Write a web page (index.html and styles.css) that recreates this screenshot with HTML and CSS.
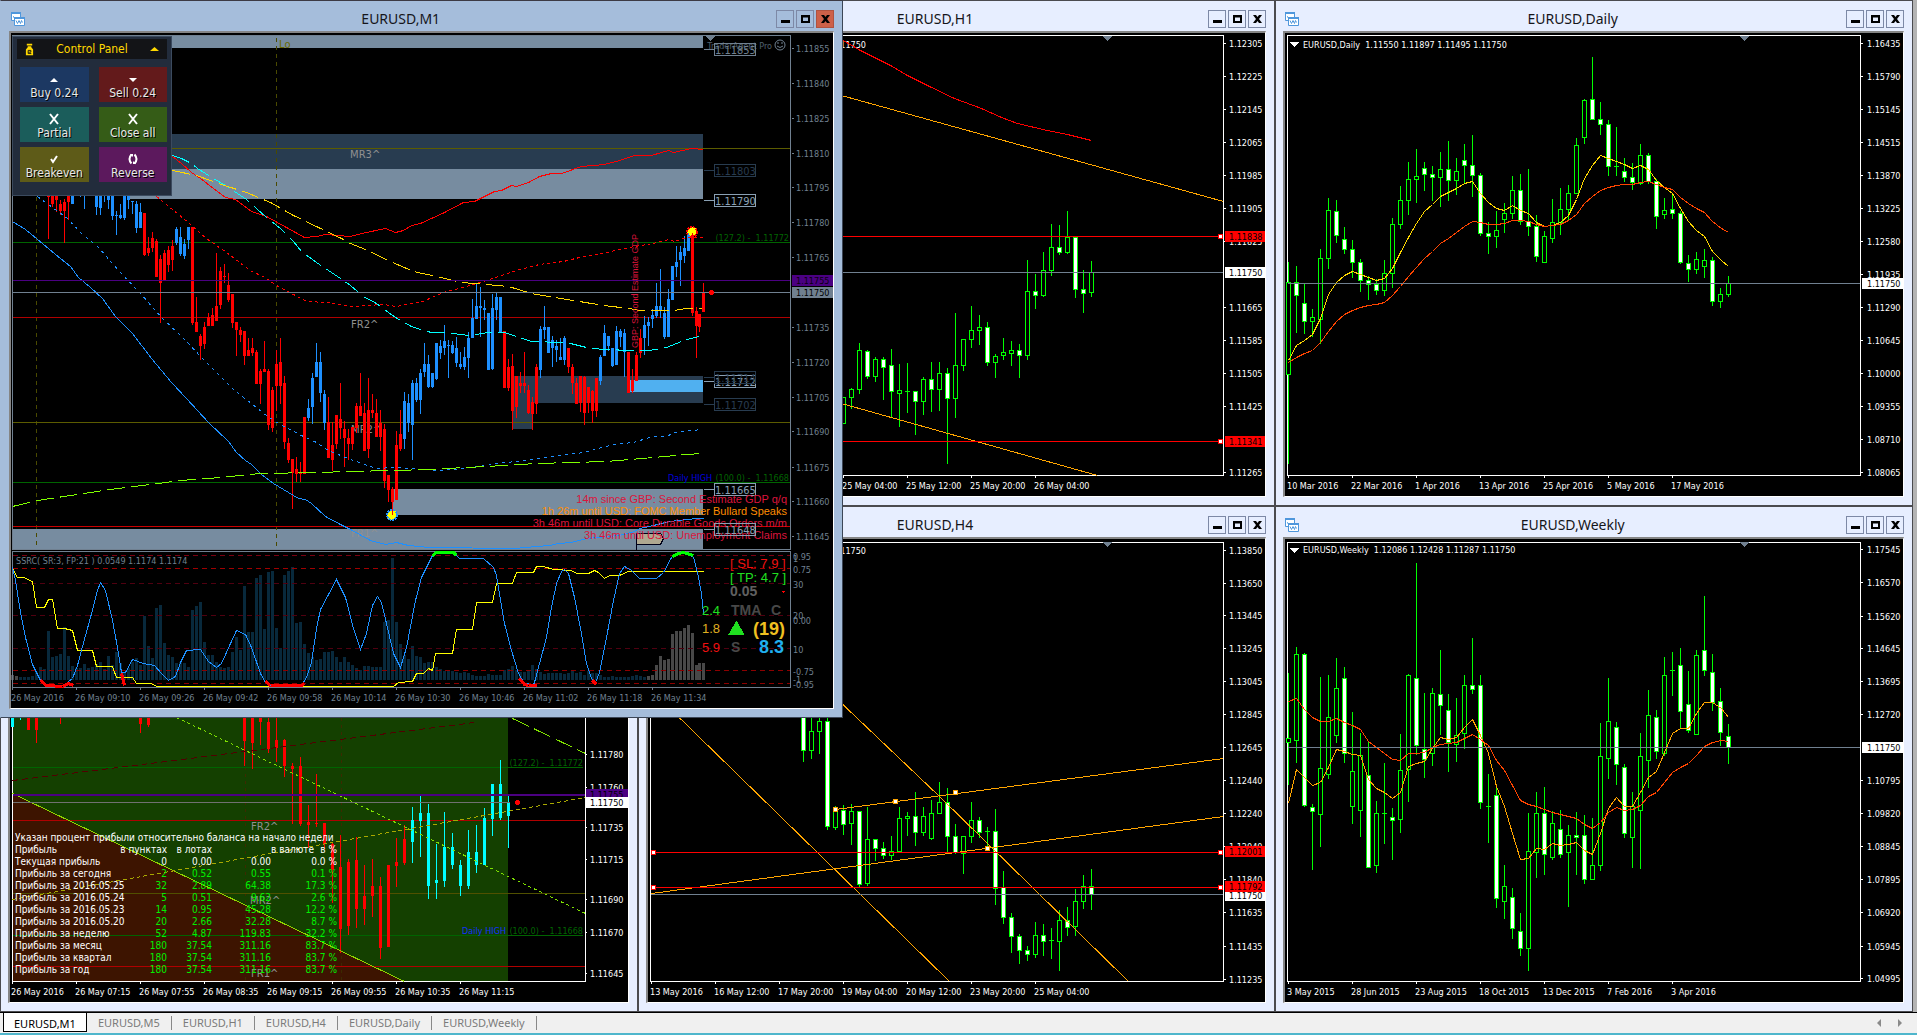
FILE: index.html
```html
<!DOCTYPE html>
<html lang="en">
<head>
<meta charset="utf-8">
<title>EURUSD,M1</title>
<link rel="stylesheet" href="styles.css">
</head>
<body>
<svg class="sprites" aria-hidden="true">
  <symbol id="chart-icon" viewBox="0 0 14 14">
    <path d="M0.500 0.500h9v8h-9z" fill="#fff" stroke="#4f97dc"/>
    <path d="M0 1h10" stroke="#4f97dc" stroke-width="2"/>
    <path d="M2.500 5.500v-1l1 1" fill="none" stroke="#4f97dc"/>
    <path d="M3.500 5.500h10v8h-10z" fill="#fff" stroke="#4f97dc"/>
    <path d="M3 6h11" stroke="#4f97dc" stroke-width="2"/>
    <path d="M5 8.500l1.500 3 1.500-3 1.500 3 1-3 1 2" fill="none" stroke="#4f97dc"/>
  </symbol>
  <symbol id="minimize" viewBox="0 0 16 16"><path d="M4 9h9v3H4z"/></symbol>
  <symbol id="maximize" viewBox="0 0 16 16"><path fill-rule="evenodd" d="M4 4h9v8H4zM6 6.500v3.500h5V6.500z"/></symbol>
  <symbol id="close" viewBox="0 0 16 16"><path d="M4 4h3l1.500 2L10 4h3l-3 4 3 4h-3l-1.500-2L7 12H4l3-4z"/></symbol>
</svg>
<main class="desk">
  <section class="window h1">
    <header class="bar">
      <svg class="app"><use href="#chart-icon"/></svg>
      <h2>EURUSD,H1</h2>
      <button aria-label="Minimize"><svg><use href="#minimize"/></svg></button>
      <button aria-label="Maximize"><svg><use href="#maximize"/></svg></button>
      <button aria-label="Close"><svg><use href="#close"/></svg></button>
    </header>
    <div class="client"><svg class="chart" data-chart="h1"></svg></div>
  </section>
  <section class="window daily">
    <header class="bar">
      <svg class="app"><use href="#chart-icon"/></svg>
      <h2>EURUSD,Daily</h2>
      <button aria-label="Minimize"><svg><use href="#minimize"/></svg></button>
      <button aria-label="Maximize"><svg><use href="#maximize"/></svg></button>
      <button aria-label="Close"><svg><use href="#close"/></svg></button>
    </header>
    <div class="client"><svg class="chart" data-chart="daily"></svg></div>
  </section>
  <section class="window m5">
    <header class="bar"></header>
    <div class="client">
      <svg class="chart" data-chart="m5"></svg>
      <table class="profit">
        <caption>Указан процент прибыли относительно баланса на начало недели</caption>
        <thead>
          <tr><th class="name">Прибыль</th><th class="points">в пунктах</th><th class="lots">в лотах</th><th class="sum"></th><th class="unit">в валюте</th><th class="share">в %</th></tr>
        </thead>
        <tbody>
          <tr class="now"><th>Текущая прибыль</th><td>0</td><td>0.00</td><td>0.00</td><td colspan="2">0.0 %</td></tr>
          <tr><th>Прибыль за сегодня</th><td>2</td><td>0.52</td><td>0.55</td><td colspan="2">0.1 %</td></tr>
          <tr><th>Прибыль за 2016.05.25</th><td>32</td><td>2.89</td><td>64.38</td><td colspan="2">17.3 %</td></tr>
          <tr><th>Прибыль за 2016.05.24</th><td>5</td><td>0.51</td><td>9.62</td><td colspan="2">2.6 %</td></tr>
          <tr><th>Прибыль за 2016.05.23</th><td>14</td><td>0.95</td><td>45.28</td><td colspan="2">12.2 %</td></tr>
          <tr><th>Прибыль за 2016.05.20</th><td>20</td><td>2.66</td><td>32.28</td><td colspan="2">8.7 %</td></tr>
          <tr><th>Прибыль за неделю</th><td>52</td><td>4.87</td><td>119.83</td><td colspan="2">32.2 %</td></tr>
          <tr><th>Прибыль за месяц</th><td>180</td><td>37.54</td><td>311.16</td><td colspan="2">83.7 %</td></tr>
          <tr><th>Прибыль за квартал</th><td>180</td><td>37.54</td><td>311.16</td><td colspan="2">83.7 %</td></tr>
          <tr><th>Прибыль за год</th><td>180</td><td>37.54</td><td>311.16</td><td colspan="2">83.7 %</td></tr>
        </tbody>
      </table>
    </div>
  </section>
  <section class="window h4">
    <header class="bar">
      <svg class="app"><use href="#chart-icon"/></svg>
      <h2>EURUSD,H4</h2>
      <button aria-label="Minimize"><svg><use href="#minimize"/></svg></button>
      <button aria-label="Maximize"><svg><use href="#maximize"/></svg></button>
      <button aria-label="Close"><svg><use href="#close"/></svg></button>
    </header>
    <div class="client"><svg class="chart" data-chart="h4"></svg></div>
  </section>
  <section class="window weekly">
    <header class="bar">
      <svg class="app"><use href="#chart-icon"/></svg>
      <h2>EURUSD,Weekly</h2>
      <button aria-label="Minimize"><svg><use href="#minimize"/></svg></button>
      <button aria-label="Maximize"><svg><use href="#maximize"/></svg></button>
      <button aria-label="Close"><svg><use href="#close"/></svg></button>
    </header>
    <div class="client"><svg class="chart" data-chart="weekly"></svg></div>
  </section>
  <section class="window m1">
    <header class="bar">
      <svg class="app"><use href="#chart-icon"/></svg>
      <h2>EURUSD,M1</h2>
      <button aria-label="Minimize"><svg><use href="#minimize"/></svg></button>
      <button aria-label="Maximize"><svg><use href="#maximize"/></svg></button>
      <button class="close" aria-label="Close"><svg><use href="#close"/></svg></button>
    </header>
    <div class="client">
      <svg class="chart" data-chart="m1"></svg>
      <div class="panel">
        <div class="panel-head">
          <svg class="purse" viewBox="0 0 10 13"><path d="M2 0h6v2H2zM3 3h4v1l2 2.500V13H1V6.500L3 4z" fill="#ffd800"/><path d="M3.500 9.500h3V7.500h-3v3.500h3.500" fill="none" stroke="#111"/></svg>
          <span>Control Panel</span>
          <svg class="arrow" viewBox="0 0 9 4"><path d="M0 4L4.500 0 9 4z" fill="#ffd800"/></svg>
        </div>
        <div class="actions">
          <button class="buy"><svg viewBox="0 0 12 12"><path d="M2 9L6 5l4 4z"/></svg>Buy 0.24</button>
          <button class="sell"><svg viewBox="0 0 12 12"><path d="M2 5h8L6 9z"/></svg>Sell 0.24</button>
          <button class="partial"><svg viewBox="0 0 12 12"><path d="M2 1l8 10M10 1L2 11" class="stroke"/></svg>Partial</button>
          <button class="closeall"><svg viewBox="0 0 12 12"><path d="M2 1l8 10M10 1L2 11" class="stroke"/></svg>Close all</button>
          <button class="even"><svg viewBox="0 0 12 12"><path d="M3 6l2 3 4-6" class="stroke"/></svg>Breakeven</button>
          <button class="reverse"><svg viewBox="0 0 12 12"><path d="M4.500 1.500Q0.500 6 4.500 10.500M7.500 1.500Q11.500 6 7.500 10.500" class="stroke"/><path d="M3 1h3v3zM9 11H6V8z"/></svg>Reverse</button>
        </div>
      </div>
    </div>
  </section>
</main>
<nav class="tabs">
  <button class="active">EURUSD,M1</button>
  <button>EURUSD,M5</button>
  <button>EURUSD,H1</button>
  <button>EURUSD,H4</button>
  <button>EURUSD,Daily</button>
  <button>EURUSD,Weekly</button>
  <span class="fill"></span>
  <button class="scroll" aria-label="Previous"><svg viewBox="0 0 5 8"><path d="M4 0v8L0 4z"/></svg></button>
  <button class="scroll" aria-label="Next"><svg viewBox="0 0 5 8"><path d="M1 0v8l4-4z"/></svg></button>
</nav>
<script src="charts.js"></script>
</body>
</html>
```
FILE: styles.css
```css
* { box-sizing: border-box; }
html, body { height: 100%; margin: 0; }
body {
  display: flex;
  flex-direction: column;
  overflow: hidden;
  background: #f0f0f0;
  border-bottom: 2px solid #4fb6cc;
  font-family: "Noto Sans", sans-serif;
  font-size: 11px;
}
button { font: inherit; padding: 0; margin: 0; border: 0; background: none; }
.sprites { position: absolute; width: 0; height: 0; }

.desk {
  position: relative;
  flex: 1;
  min-height: 0;
  display: grid;
  grid-template-columns: repeat(3, 1fr);
  grid-template-rows: repeat(2, minmax(0, 1fr));
  padding-right: 4px;
  background: #b4b4b4;
}
.window {
  display: flex;
  flex-direction: column;
  min-width: 0;
  padding: 0 8px 8px 7px;
  border: 1px solid #4b4b4f;
  background: #e7eeff;
}
.h1 { grid-area: 1 / 2; }
.daily { grid-area: 1 / 3; }
.m5 { grid-area: 2 / 1; }
.h4 { grid-area: 2 / 2; }
.weekly { grid-area: 2 / 3; }
.m1 {
  position: absolute;
  left: 0;
  top: 0;
  width: 44%;
  height: 70.95%;
  z-index: 2;
  padding-left: 8px;
  border-color: #3c3a44 #3c4656 #3c4656 #a5bddb;
  background: #a5bddb;
}
.bar { display: flex; align-items: center; gap: 2px; height: 30px; flex: none; padding: 6px 0 0 2px; }
.bar h2 { flex: 1; margin: 0; font-size: 14px; line-height: 20px; font-weight: 400; text-align: center; color: #15151a; }
.bar .app { width: 14px; height: 14px; }
.bar button { width: 18px; height: 18px; border: 1px solid #7d89a6; }
.bar button svg { display: block; width: 16px; height: 16px; }
.bar .close { background: #cd6048; border-color: #b0523f; }
.client {
  position: relative;
  flex: 1;
  min-height: 0;
  border: 2px solid #858585;
  border-right: 1px solid #fff;
  border-bottom: 1px solid #fff;
  background: #000;
}
.chart { position: absolute; inset: 0; width: 100%; height: 100%; display: block; }
.chart text { font-family: "DejaVu Sans Condensed", "DejaVu Sans", sans-serif; font-stretch: condensed; font-size: 9px; white-space: pre; }
.chart .mark { font-family: "DejaVu Sans", sans-serif; font-stretch: normal; font-size: 10px; }
.chart .tag { font-size: 11px; }
.chart .news { font-family: "Liberation Sans", sans-serif; font-size: 11px; font-stretch: normal; }
.chart .event { font-family: "Liberation Sans", sans-serif; font-size: 9px; font-stretch: normal; }
.chart .value { font-family: "Liberation Sans", sans-serif; font-size: 13px; font-stretch: normal; }
.chart .bold { font-family: "Liberation Sans", sans-serif; font-size: 14px; font-weight: 700; font-stretch: normal; }
.chart .big { font-family: "Liberation Sans", sans-serif; font-size: 18px; font-weight: 700; font-stretch: normal; }

.profit {
  position: absolute;
  left: 5px;
  bottom: 26px;
  width: 322px;
  table-layout: fixed;
  border-collapse: collapse;
  font: 10px/12px "DejaVu Sans Condensed", "DejaVu Sans", sans-serif;
  font-stretch: condensed;
  color: #00f000;
  white-space: nowrap;
}
.profit caption { text-align: left; color: #fff; line-height: 12px; }
.profit th { padding: 0; text-align: left; font-weight: 400; color: #fff; }
.profit td { padding: 0; text-align: right; }
.profit thead th { text-align: right; }
.profit thead .name { width: 92px; text-align: left; }
.profit .points { width: 60px; }
.profit .lots { width: 45px; }
.profit .sum { width: 59px; }
.profit .unit { width: 42px; }
.profit .now td { color: #fff; }

.panel {
  position: absolute;
  left: 1px;
  top: 3px;
  width: 160px;
  padding: 2px 4px 13px;
  border: 1px solid #3b4a5e;
  background: #222c3c;
  font: 12px/14px "DejaVu Sans Condensed", "DejaVu Sans", sans-serif;
  font-stretch: condensed;
  color: #e8e8e8;
}
.panel-head { display: flex; align-items: center; height: 20px; padding: 0 8px; background: #131417; color: #ffd800; }
.panel-head span { flex: 1; text-align: center; }
.purse { width: 9px; height: 13px; }
.arrow { width: 9px; height: 4px; }
.actions { display: grid; grid-template-columns: 1fr 1fr; gap: 5px 10px; padding: 8px 0 0 3px; }
.actions button {
  display: flex;
  flex-direction: column;
  align-items: center;
  justify-content: flex-end;
  height: 35px;
  gap: 1px;
  padding-bottom: 2px;
  color: #e8e8e8;
  text-shadow: 1px 1px 0 #000;
}
.actions svg { width: 12px; height: 12px; fill: #fff; }
.actions .stroke { fill: none; stroke: #fff; stroke-width: 2; }
.buy { background: #1c3862; }
.sell { background: #631a1b; }
.partial { background: #1b5d5b; }
.closeall { background: #355c17; }
.even { background: #5e5b18; }
.reverse { background: #5c195d; }

.tabs {
  display: flex;
  flex: none;
  height: 21px;
  padding: 0 8px 1px 3px;
  border-top: 1px solid #000;
  background: #f0f0f0;
  box-shadow: 0 -1px 0 #fff;
}
.tabs button { padding: 0 11px; color: #7b7b7b; border-right: 1px solid #888; margin: 3px 0 2px; line-height: 14px; }
.tabs .active { margin: 0; padding: 3px 10px 0; border: 1px solid #000; border-top: 0; background: #fff; color: #000; }
.fill { flex: 1; }
.tabs .scroll { width: 20px; border: 0; padding: 0; }
.scroll svg { display: block; width: 5px; height: 8px; margin: auto; fill: #8a8a8a; }
```
FILE: charts.js
```js
// Each chart lists its shapes in its own view units [left, top, right, bottom];
// the view is fitted to the window, and text keeps its size.
const LIME = '#00ff00', SLATE = '#708090', ORANGE = '#ffa500', GREEN = '#006400';
const px = (n) => Math.round(n);

// ticks of the time axis
const times = (x, step, y, tick, labels, color) => [
  ...labels.map((s, i) => ['text', x + i * step, y, color, s]),
  ...labels.map((s, i) => ['v', x + 3 + i * step, tick, tick + 9, color]),
];
// ticks of the price axis
const prices = (x, ys, labels, color) => [
  ...labels.map((s, i) => ['text', x, ys[i], color, s]),
  ...labels.map((s, i) => ['h', ys[i], x - 14, x - 8, color]),
];
const even = (from, step, n) => Array.from({ length: n }, (_, i) => from + i * step);

const charts = {
  daily: { view: [37, 99, 1534, 1488], items: [
    ['frame', 43, 106, 1431, 1426, '#fff'],
    ['candles', 44, 19.388, `787 847 1123 1393 o,798 847 886 998 w,850 909 964 1001 w,927 952 964 1010 o,747 775 956 1031 o,594 631 775 807 o,600 634 706 728 w,682 717 748 761 w,720 748 787 834 w,777 787 841 876 w,828 841 853 900 w,838 853 871 884 w,781 820 871 887 o,654 673 820 864 o,558 601 673 687 o,487 538 601 645 o,447 529 538 608 o,487 505 523 573 w,499 523 532 604 w,456 508 532 621 o,423 508 541 602 w,475 514 541 584 o,432 481 496 550 w,405 496 526 590 w,519 526 700 709 w,667 700 709 762 w,633 691 709 744 o,609 640 658 700 o,528 571 640 657 o,522 571 664 675 w,507 664 679 708 w,645 679 769 786 w,693 709 787 789 o,597 667 715 728 o,564 628 667 705 o,555 580 628 664 o,414 436 580 583 o,297 301 412 432 o,171 298 358 360 w,306 358 373 405 w,361 373 499 528 w,381 499 502 528 o,475 514 532 546 w,489 532 547 570 w,432 466 550 555 o,460 466 544 551 w,537 544 649 687 w,594 631 643 657 o,582 628 640 657 w,634 640 787 791 w,765 790 808 846 w,756 778 808 822 o,747 781 799 834 o,772 781 904 917 w,864 883 904 923 o,828 850 883 890 o`],
    ['line', '#ffd700', '', 1, '44,1080 64,1036 83,1019 103,1003 122,953 142,883 161,845 180,824 200,814 219,821 238,830 258,839 277,835 297,805 316,755 335,710 355,668 374,633 393,612 413,588 432,576 452,563 471,550 490,544 510,578 529,607 549,624 568,629 587,616 606,629 626,640 645,666 665,677 684,676 704,665 723,645 743,597 762,534 781,494 800,466 820,474 839,483 859,493 878,505 898,495 917,508 936,540 956,560 975,580 995,625 1014,663 1033,690 1053,709 1072,753 1092,780 1111,797'],
    ['line', '#ff4500', '', 1, '44,1087 64,1070 83,1060 103,1050 122,1025 142,993 161,964 180,943 200,930 219,922 238,916 258,913 277,905 297,885 316,858 335,828 355,800 374,774 393,752 413,729 432,715 452,696 471,679 490,664 510,665 529,671 549,673 568,670 587,661 606,661 626,664 645,673 665,677 684,675 704,671 723,661 743,642 762,609 781,589 800,569 820,562 839,556 859,553 878,552 898,547 917,544 936,553 956,562 975,568 995,590 1014,610 1033,624 1053,636 1072,664 1092,683 1111,697'],
    ['h', 850, 45, 1431, SLATE],
    ['tri', 59, 132, '#fff'], ['tri', 1150, 115, SLATE],
    ['text', 81, 131, '#fff', 'EURUSD,Daily  1.11550 1.11897 1.11495 1.11750'],
    ...prices(1446, even(130, 99, 14), '1.16435 1.15790 1.15145 1.14515 1.13870 1.13225 1.12580 1.11935 1.11290 1.10645 1.10000 1.09355 1.08710 1.08065'.split(' '), '#fff'),
    ['price', 1435, 850, '#fff', '#000', '1.11750', 1446],
    ...times(42, 155.1, 1454, 1426, ['10 Mar 2016', '22 Mar 2016', '1 Apr 2016', '13 Apr 2016', '25 Apr 2016', '5 May 2016', '17 May 2016'], '#fff'),
  ] },
  weekly: { view: [37, 100.6, 1534, 1470], items: [
    ['frame', 43, 108, 1431, 1409, '#fff'],
    ['candles', 44, 19.388, `497 690 702 827 o,420 442 696 763 o,438 442 886 893 w,885 892 906 1080 w,509 779 915 1012 o,503 628 797 810 o,453 542 681 704 o,479 513 733 763 w,612 788 891 943 o,673 739 903 981 o,698 800 1070 1071 w,876 912 1066 1089 o,763 911 913 1003 o,896 923 931 1050 w,677 785 930 969 o,500 504 780 879 o,172 513 711 740 w,556 723 752 807 w,541 557 733 772 o,429 560 593 680 w,559 607 702 790 w,571 681 708 760 o,503 533 673 721 o,393 531 545 559 w,503 533 877 899 w,796 891 894 1000 o,838 859 1161 1192 w,1065 1128 1170 1225 o,1133 1158 1252 1284 w,1207 1261 1309 1333 w,911 1022 1309 1379 o,850 912 1025 1104 o,833 912 1033 1095 w,905 942 1042 1050 o,902 957 1031 1043 w,947 977 1025 1189 o,908 977 983 1095 w,917 977 1107 1121 w,926 1066 1105 1109 o,646 741 1066 1084 o,512 640 749 809 o,642 658 767 827 w,767 776 971 985 w,850 891 983 1074 o,675 741 903 1077 o,547 622 755 838 o,606 628 729 750 w,450 504 733 741 o,435 489 492 566 o,423 474 610 660 w,491 590 665 674 w,429 445 676 677 o,269 430 487 506 w,441 495 584 609 w,541 581 670 713 w,649 684 717 767 w`],
    ['line', ORANGE, '', 1, '44,882 64,782 83,806 103,828 122,818 142,776 161,723 180,727 200,737 219,739 238,809 258,836 277,850 297,867 316,850 335,773 355,762 374,758 393,718 413,687 432,691 452,687 471,657 490,632 510,680 529,735 549,830 568,890 587,970 606,1048 626,1043 645,1014 665,1018 684,1001 704,1006 723,1002 743,998 762,1021 781,1032 800,970 820,897 839,865 859,890 878,890 898,850 917,805 936,788 956,731 975,675 995,661 1014,661 1033,615 1053,584 1072,584 1092,600 1111,627'],
    ['line', '#ff4500', '', 1, '44,580 64,570 83,602 103,627 122,640 142,640 161,631 180,641 200,652 219,662 238,698 258,717 277,734 297,751 316,755 335,733 355,733 374,731 393,716 413,706 432,705 452,702 471,688 490,676 510,693 529,711 549,753 568,785 587,829 606,872 626,885 645,890 665,900 684,908 704,915 723,921 743,927 762,945 781,954 800,937 820,908 839,893 859,903 878,899 898,888 917,862 936,850 956,820 975,790 995,774 1014,764 1033,738 1053,712 1072,700 1092,696 1111,698'],
    ['h', 717, 45, 1431, SLATE],
    ['tri', 59, 132, '#fff'], ['tri', 1150, 116, SLATE],
    ['text', 81, 131, '#fff', 'EURUSD,Weekly  1.12086 1.12428 1.11287 1.11750'],
    ...prices(1446, [131, 229, 327, 424, 522, 619, 814, 912, 1010, 1107, 1205, 1303, 1400], '1.17545 1.16570 1.15620 1.14645 1.13695 1.12720 1.10795 1.09820 1.08845 1.07895 1.06920 1.05945 1.04995'.split(' '), '#fff'),
    ['price', 1435, 717, '#fff', '#000', '1.11750', 1446],
    ...times(42, 155.1, 1437, 1409, ['3 May 2015', '28 Jun 2015', '23 Aug 2015', '18 Oct 2015', '13 Dec 2015', '7 Feb 2016', '3 Apr 2016'], '#fff'),
  ] },
  h1: { view: [-577, 99, 1276, 1488], items: [
    ['frame', -570, 106, 1147, 1426, '#fff'],
    ['text', 78, 131, '#fff', '1.11750', '', 'end'],
    ['candles', 7, 24, `1190 1192 1268 1270 o,1163 1168 1192 1226 o,1029 1051 1168 1181 o,1049 1054 1127 1136 w,1071 1078 1127 1145 o,1071 1078 1100 1200 w,1047 1096 1174 1253 w,1092 1171 1178 1280 o,1089 1174 1175 1240 o,1172 1174 1204 1304 w,1131 1138 1204 1244 o,1086 1138 1168 1236 w,1086 1120 1168 1232 o,1104 1120 1195 1391 w,939 1096 1195 1253 o,1017 1018 1096 1112 o,918 991 1018 1044 o,945 982 991 1034 o,966 982 1087 1098 w,1062 1069 1087 1134 o,1014 1057 1066 1080 o,1023 1051 1060 1098 o,1032 1051 1066 1134 w,780 874 1066 1080 o,823 874 886 926 w,756 811 886 890 o,672 742 811 828 o,675 742 757 765 w,633 710 757 762 o,709 710 868 893 w,810 868 880 939 w,783 817 877 890 o`],
    ['line', '#ff0000', '', 1, '2,118 60,150 150,195 200,224 260,255 340,294 420,325 480,352 530,369 620,391 680,402 750,421'],
    ['line', ORANGE, '', 1, '2,284 1146,604'],
    ['line', ORANGE, '', 1, '2,1210 768,1424'],
    ['h', 709, 0, 1146, '#ff0000'], ['h', 1324, 0, 1146, '#ff0000'], ['h', 817, 0, 1146, SLATE],
    ['grip', 1138, 709, '#ff0000'], ['grip', 1138, 1324, '#ff0000'], ['tri', 799, 115, SLATE],
    ...prices(1165, [130, 229, 328, 427, 526, 625, 724, 922, 1021, 1120, 1219, 1417], '1.12305 1.12225 1.12145 1.12065 1.11985 1.11905 1.11825 1.11665 1.11585 1.11505 1.11425 1.11265'.split(' '), '#fff'),
    ['price', 1152, 707, '#ff0000', '#000', '1.11838', 1165], ['price', 1152, 817, '#fff', '#000', '1.11750', 1165], ['price', 1152, 1322, '#ff0000', '#000', '1.11341', 1165],
    ...times(4, 192, 1454, 1426, ['25 May 04:00', '25 May 12:00', '25 May 20:00', '26 May 04:00'], '#fff'),
  ] },
  h4: { view: [18.8, 86.6, 1532, 1469.6], items: [
    ['frame', 24, 95, 1427, 1408, '#fff'],
    ['text', 553, 118, '#fff', '1.11750', '', 'end'],
    ['candles', 398, 19.6, `560 560 718 752 w,560 661 718 744 o,600 631 661 728 o,615 631 945 956 w,885 896 948 956 o,880 896 937 970 w,878 900 934 1001 o,898 900 1118 1126 w,887 984 1115 1123 o,983 984 1010 1048 w,992 1010 1031 1042 w,974 1019 1031 1044 o,887 921 1019 1020 o,902 915 921 974 o,842 915 963 1004 w,887 915 963 974 o,865 906 981 986 o,812 873 906 908 o,829 873 975 1022 w,938 975 1022 1029 w,974 975 1025 1087 o,872 927 975 994 o,917 927 963 980 w,947 959 962 1010 o,893 960 1130 1179 w,1078 1127 1217 1238 w,1204 1217 1273 1323 w,1265 1273 1315 1356 w,1302 1315 1325 1346 w,1231 1270 1325 1337 o,1236 1270 1286 1331 w,1250 1285 1288 1341 o,1194 1226 1286 1376 o,1186 1226 1246 1272 w,1132 1169 1244 1272 o,1090 1124 1169 1191 o,1072 1124 1148 1194 w`],
    ['line', ORANGE, '', 1, '26,538 757,1407'], ['line', ORANGE, '', 1, '480,563 730,852 1195,1407'],
    ['line', ORANGE, '', 1, '476,894 1427,740'], ['line', ORANGE, '', 1, '26,1145 1427,915'],
    ['h', 1022, 26, 1427, '#ff0000'], ['h', 1127, 26, 1427, '#ff0000'], ['h', 1148, 26, 1427, SLATE],
    ['grip', 476, 894, ORANGE], ['grip', 623, 870, ORANGE], ['grip', 770, 843, ORANGE], ['grip', 849, 1011, ORANGE],
    ['grip', 30, 1022, '#ff0000'], ['grip', 30, 1127, '#ff0000'], ['grip', 1420, 1022, '#ff0000'], ['grip', 1420, 1127, '#ff0000'],
    ['tri', 1143, 103, SLATE],
    ...prices(1441, [118, 217, 315, 413, 512, 610, 709, 807, 906, 1004, 1103, 1202, 1301, 1400], '1.13850 1.13650 1.13445 1.13245 1.13045 1.12845 1.12645 1.12440 1.12240 1.12040 1.11840 1.11635 1.11435 1.11235'.split(' '), '#fff'),
    ['price', 1431, 1149, '#fff', '#000', '1.11750', 1441], ['price', 1431, 1020, '#ff0000', '#000', '1.12001', 1441], ['price', 1431, 1124, '#ff0000', '#000', '1.11792', 1441],
    ...times(23, 156.7, 1436, 1408, ['13 May 2016', '16 May 12:00', '17 May 20:00', '19 May 04:00', '20 May 12:00', '23 May 20:00', '25 May 04:00'], '#fff'),
  ] },
  m5: { view: [24.5, -513, 1538, 876], items: [
    ['zone', 30, -506, 1245, 814, '#144000'],
    ['area', '#3d1400', '30,250 990,812 30,812'],
    ['frame', 30, -506, 1433, 814, '#fff'],
    ['line', '#3c2a00', '3 4', 1, '599,22 599,812'], ['line', '#3c2a00', '3 4', 1, '834,22 834,812'],
    ['h', 171, 32, 1428, GREEN], ['h', 331, 32, 1433, '#b00000'], ['h', 550, 32, 1433, '#505000'],
    ['h', 676, 32, 1428, GREEN], ['h', 769, 32, 1433, '#b00000'],
    ['bars', 30, 19.6, 3, `0 0 52 52 c,22 22 22 30 c,0 0 59 59 r,0 0 59 98 r,-,-,0 0 0 41 r,-,-,-,-,-,-,-,-,-,0 0 41 69 r,0 0 44 50 r,-,-,-,-,-,-,-,-,-,-,-,0 0 92 167 r,0 0 98 176 r,0 0 36 104 r,22 35 118 130 r,0 90 113 155 r,88 90 167 200 r,160 168 176 341 r,141 168 341 348 r,285 337 346 415 r,192 340 343 350 r,339 339 403 420 r,395 403 480 580 r,374 470 658 730 r,448 455 647 675 r,382 450 598 654 r,465 557 596 645 r,446 528 557 622 r,500 528 715 747 r,465 465 710 712 r,383 455 467 530 r,345 387 458 464 r,291 330 395 458 c,258 308 332 440 c,282 308 527 567 c,402 509 518 567 c,307 410 512 530 c,369 410 464 478 c,450 464 527 557 c,360 427 527 537 c,345 427 464 488 c,295 323 464 465 c,222 222 326 378 c,150 222 323 330 c,258 277 317 413 c`],
    ['line', '#500000', '6 4', 1, '30,209 290,170 1160,35'],
    ['line', '#8fd400', '', 1, '30,250 990,812'], ['line', '#7fe000', '3 3', 1, '430,22 1433,610'],
    ['line', '#7fe000', '18 6', 1, '1255,25 1433,130'], ['line', '#a8a800', '4 3', 1, '30,568 1433,262'],
    ['h', 253, 32, 1433, '#4b0082', 2], ['h', 277, 32, 1250, '#707070'], ['dot', 1265, 277],
    ['text', 1428, 155, GREEN, '(127.2) -  1.11772', '', 'end'],
    ['text', 1428, 659, GREEN, '(100.0) -  1.11668', '', 'end'], ['text', 1239, 659, '#1030ff', 'Daily HIGH', '', 'end'],
    ['text', 615, 349, '#909090', 'FR2^', 'mark'], ['text', 613, 570, '#909090', 'MR2^', 'mark'], ['text', 615, 788, '#909090', 'FR1^', 'mark'],
    ...prices(1446, [131, 230, 350, 448, 568, 667, 788], '1.11780 1.11760 1.11735 1.11715 1.11690 1.11670 1.11645'.split(' '), '#fff'),
    ['price', 1436, 253, '#4b0082', '#000', '1.11755', 1446], ['price', 1436, 277, '#fff', '#000', '1.11750', 1446],
    ...times(27, 156.8, 842, 814, ['26 May 2016', '26 May 07:15', '26 May 07:55', '26 May 08:35', '26 May 09:15', '26 May 09:55', '26 May 10:35', '26 May 11:15'], '#fff'),
  ] },
  m1: { view: [33, 99, 2502, 2124], items: [
    ['zone', 390, 108, 2112, 144, '#778ca0'], ['zone', 390, 402, 2112, 507, '#283c50'], ['zone', 390, 507, 2112, 597, '#778ca0'],
    ['zone', 36, 1587, 2112, 1646, '#778ca0'], ['zone', 1180, 1467, 2112, 1545, '#778ca0'],
    ['zone', 1545, 1128, 2112, 1209, '#283c50'], ['zone', 1540, 1209, 1600, 1287, '#283c50'], ['zone', 1890, 1140, 2112, 1176, '#50b0f0'],
    ['line', '#4a4a00', '4 4', 1, '109,587 109,1646'], ['line', '#4a4a00', '4 4', 1, '829,110 829,1646'],
    ['h', 445, 390, 2373, '#5c5c00'], ['h', 727, 36, 2373, GREEN], ['h', 952, 36, 2373, '#b00000'],
    ['h', 1267, 36, 2373, '#5c5c00'], ['h', 1447, 36, 2373, GREEN], ['h', 1579, 36, 2373, '#c80000'],
    ['text', 838, 131, '#6a6a00', 'Lo', 'mark'],
    ['text', 1052, 463, '#909090', 'MR3^', 'mark'], ['text', 1055, 971, '#909090', 'FR2^', 'mark'],
    ['text', 1055, 1286, '#909090', 'MR2^', 'mark'], ['text', 1055, 1598, '#909090', 'FR1^', 'mark'],
    ['sun', 1177, 1546, '#1e90ff'], ['sun', 2077, 696, '#ff0000'],
    ['bars', 145, 12, 3, `560 560 590 718 r,560 560 613 620 r,560 560 600 637 r,600 612 634 645 r,597 605 634 730 r,560 560 606 661 r,560 560 613 613 b,-,560 560 560 590 b,560 560 560 627 b,-,-,560 560 620 645 b,560 560 625 645 b,560 560 560 605 b,560 560 600 628 b,560 560 647 660 b,633 645 648 705 b,613 645 655 657 b,560 560 655 660 b,560 560 600 628 b,603 603 606 642 b,603 612 683 698 b,610 637 683 683 b,638 638 766 768 r,710 745 758 767 r,697 715 745 757 r,717 724 830 830 r,765 778 850 968 r,750 758 843 843 r,738 750 795 816 r,720 738 780 813 r,682 688 728 735 b,682 710 762 767 b,717 733 767 778 b,682 682 720 747 b,682 682 968 975 r,892 965 995 995 r,1002 1008 1038 1080 r,965 980 1032 1047 r,938 952 977 977 r,925 945 977 977 r,760 917 962 962 r,800 812 915 927 r,792 828 832 850 r,820 855 900 907 r,882 882 968 983 r,965 965 990 1068 r,980 990 1005 1025 r,993 993 1067 1095 r,1013 1050 1067 1067 r,1013 1043 1058 1068 r,1050 1055 1152 1152 r,1107 1113 1152 1213 r,1022 1108 1115 1115 r,1108 1113 1275 1290 r,1160 1170 1283 1297 r,1050 1092 1157 1233 r,1013 1086 1157 1213 r,1128 1150 1325 1347 r,1315 1328 1380 1388 r,1377 1377 1420 1527 r,1370 1407 1422 1446 r,1385 1415 1422 1446 r,1250 1250 1422 1422 r,1197 1224 1254 1263 b,1120 1133 1220 1273 b,1028 1086 1130 1130 b,1056 1086 1178 1205 b,1170 1183 1268 1290 b,1190 1267 1373 1373 r,1265 1335 1380 1413 r,1245 1245 1332 1348 r,1150 1258 1283 1317 r,1263 1288 1315 1400 r,1287 1314 1332 1380 r,1282 1282 1332 1350 r,1210 1218 1283 1300 r,1120 1218 1247 1248 r,1210 1240 1353 1353 r,1133 1230 1348 1375 r,1183 1230 1240 1253 r,1197 1240 1310 1310 r,1230 1268 1310 1353 r,1272 1288 1443 1465 r,1425 1425 1470 1507 r,1462 1467 1507 1545 r,1293 1335 1500 1500 r,1230 1302 1347 1353 r,1177 1202 1317 1347 b,1183 1210 1268 1297 b,1140 1150 1275 1380 b,1133 1150 1200 1207 b,1107 1119 1200 1242 b,1028 1092 1115 1130 b,1065 1093 1160 1163 b,1118 1120 1160 1165 b,1028 1030 1137 1140 b,1020 1037 1058 1078 b,975 1023 1045 1065 b,1020 1034 1038 1135 b,1022 1035 1058 1062 b,1010 1045 1088 1100 b,1057 1092 1100 1107 b,1042 1072 1100 1110 b,995 1015 1073 1135 b,897 953 1015 1015 b,850 918 957 957 b,860 918 925 1010 b,900 925 930 960 b,938 938 1110 1110 b,882 925 1108 1110 b,880 892 930 960 b,890 890 997 997 b,993 993 1163 1163 r,1077 1100 1163 1172 r,1063 1098 1232 1290 r,1128 1128 1220 1253 r,1117 1150 1158 1178 r,1055 1148 1157 1180 r,1155 1170 1240 1242 r,1190 1207 1242 1290 r,1092 1100 1213 1242 r,978 988 1110 1135 b,917 980 990 1017 b,980 982 1058 1060 b,1007 1020 1043 1100 b,1020 1037 1050 1085 b,1015 1070 1080 1080 b,1008 1015 1080 1095 b,1045 1045 1102 1120 r,1092 1100 1150 1182 r,1133 1150 1213 1213 r,1128 1128 1210 1235 r,1128 1130 1240 1275 r,1160 1162 1210 1240 r,1170 1172 1232 1270 r,1133 1133 1232 1250 r,1065 1072 1143 1155 b,975 1000 1067 1067 b,1008 1008 1038 1053 b,1045 1045 1097 1100 b,977 993 1095 1095 b,988 992 1010 1042 b,988 1000 1055 1130 b,1055 1055 1178 1180 r,1107 1140 1173 1178 r,1055 1065 1143 1143 r,987 1015 1060 1075 r,947 975 1015 1065 b,950 965 978 1038 b,928 945 957 985 b,850 917 947 955 b,807 917 933 955 b,922 938 1010 1017 b,868 897 1010 1010 b,797 797 900 900 b,738 785 800 830 b,738 757 780 858 b,708 743 767 790 b,700 705 752 752 b,700 705 940 947 r,922 933 977 1073 r,943 943 982 995 r,848 878 935 935 r`],
    ['line', '#ff0000', '', 1, '517,467 545,490 575,515 600,535 640,565 675,592 705,597 755,632 800,648 860,682 912,710 950,708 975,702 1050,708 1085,698 1155,685 1187,697 1210,690 1235,676 1262,670 1295,655 1335,635 1390,605 1425,602 1485,572 1505,570 1535,555 1550,557 1585,547 1620,528 1655,520 1685,519 1745,499 1815,492 1860,480 1905,465 1955,465 2005,450 2022,457 2075,445 2112,446'],
    ['line', '#00ffff', '18 6', 1, '517,465 545,475 575,488 592,505 640,533 675,555 740,598 800,652 840,685 880,722 905,752 950,787 1020,835 1050,855 1090,887 1130,908 1165,935 1185,950 1235,977 1270,989 1295,995 1330,997 1410,1005 1465,997 1515,997 1595,1022 1620,1024 1665,1025 1700,1027 1760,1042 1810,1048 1900,1050 1950,1050 2000,1040 2030,1030 2060,1017 2100,1008'],
    ['line', '#ffd700', '18 6', 1, '517,510 590,525 665,552 740,575 810,607 880,645 955,682 1025,715 1050,730 1095,748 1170,782 1240,812 1310,828 1385,845 1425,850 1460,853 1525,858 1595,878 1665,892 1740,902 1810,915 1890,925 1920,931 2020,931 2060,923 2105,923'],
    ['line', '#ff0000', '3 3', 1, '470,587 550,655 620,715 680,755 755,812 790,827 830,855 880,882 920,903 980,905 1050,917 1150,913 1190,918 1230,910 1260,905 1310,885 1340,873 1390,860 1460,840 1550,810 1620,793 1690,782 1750,768 1820,757 1890,742 1960,730 2005,718 2025,722 2060,712 2110,712'],
    ['line', '#1e90ff', '', 1, '35,663 75,688 125,730 165,763 210,797 235,830 270,860 305,895 345,947 395,1000 455,1075 515,1147 560,1195 625,1265 685,1322 710,1355 735,1380 755,1392 785,1422 820,1450 895,1493 915,1497 935,1508 975,1548 1020,1573 1050,1588 1110,1620 1155,1633 1190,1625 1225,1635 1290,1642 1545,1643 1610,1638 1650,1635 1675,1628 1715,1627 1760,1615 1790,1610 1860,1605 1905,1592 1920,1585 1960,1575 2010,1562 2090,1553 2112,1555'],
    ['line', '#1e90ff', '3 4', 1, '110,587 155,622 200,655 240,695 295,742 355,810 420,880 485,950 550,1015 610,1078 700,1168 800,1245 835,1270 910,1307 950,1325 985,1350 1050,1378 1130,1403 1180,1402 1310,1410 1395,1405 1460,1393 1550,1383 1640,1370 1750,1355 1840,1332 1900,1325 1950,1310 2005,1305 2025,1295 2105,1288'],
    ['line', '#7fff00', '18 6', 1, '35,1517 110,1500 250,1480 330,1467 475,1450 540,1440 660,1430 780,1420 950,1417 1050,1414 1180,1410 1290,1408 1340,1405 1460,1398 1610,1390 1820,1382 1960,1372 2060,1362 2105,1360'],
    ['h', 841, 36, 2373, '#4b0082'], ['h', 877, 36, 2373, SLATE], ['dot', 2137, 877],
    ['frame', 36, 106, 2374, 1646, SLATE],
    ['text', 2320, 135, '#50606f', 'TraderAgent Pro', '', 'end'], ['smile', 2342, 135],
    ['boxed', 147, SLATE, '1.11855'], ['boxed', 510, '#283c50', '1.11803'], ['boxed', 600, '#8aa0b4', '1.11790'],
    ['boxed', 1142, '#8aa0b4', '1.11712'], ['boxed', 1130, '#283c50', '1.11714'], ['boxed', 1212, '#283c50', '1.11702'],
    ['boxed', 1468, '#8aa0b4', '1.11665'],
    ['text', 2370, 710, GREEN, '(127.2) -  1.11772', '', 'end'], ['text', 2370, 1430, GREEN, '(100.0) -  1.11668', '', 'end'],
    ['text', 2138, 1430, '#0000e0', 'Daily HIGH', '', 'end'],
    ['area', '#b0a890', '1910,1600 1982,1600 1990,1615 1982,1632 1910,1632'], ['line', '#000018', '', 1, '1910,1646 1910,1600 1982,1600 1990,1615 1982,1632 1910,1632'],
    ['text', 2365, 1498, '#dc143c', '14m since GBP: Second Estimate GDP q/q', 'news', 'end'],
    ['text', 2365, 1534, '#ff8c00', '1h 26m until USD: FOMC Member Bullard Speaks', 'news', 'end'],
    ['text', 2365, 1570, '#dc143c', '3h 46m until USD: Core Durable Goods Orders m/m', 'news', 'end'],
    ['text', 2365, 1606, '#dc143c', '3h 46m until USD: Unemployment Claims', 'news', 'end'],
    ['boxed', 1588, '#8aa0b4', '1.11648'],
    ['side', 1908, 1045, '#dc143c', 'GBP: Second Estimate GDP'],
    ['tri', 2134, 114, SLATE],
    ...prices(2392, [145, 250, 355, 460, 562, 667, 772, 982, 1087, 1192, 1294, 1400, 1504, 1609], '1.11855 1.11840 1.11825 1.11810 1.11795 1.11780 1.11765 1.11735 1.11720 1.11705 1.11690 1.11675 1.11660 1.11645'.split(' '), SLATE),
    ['price', 2380, 841, '#4b0082', '#0a0010', '1.11755', 2392], ['price', 2380, 877, SLATE, '#000', '1.11750', 2392],
    ['histogram', 37, 12, 2041, '405 407 411 411 411 407 395 381 387 272 350 348 342 262 348 378 385 385 372 384 381 372 366 387 348 375 336 370 395 385 365 355 376 228 318 354 204 195 309 345 351 368 366 370 381 210 198 186 306 345 345 366 380 384 381 336 291 330 138 276 276 114 105 267 96 93 264 324 105 93 81 249 246 312 339 350 360 357 336 336 333 351 366 351 366 375 384 390 378 378 380 381 381 246 240 54 246 312 345 357 318 348 351 369 366 366 382 387 393 393 393 396 400 396 398 404 408 408 407 402 405 405 404 390 387 378 390 396 396 390 375 386 396 403 400 400 400 400 402 398 390 398 396 405 393 400 400 405 411 411 408 411 411 411 411 408 405 408 411 408 404 375 348 360 357 282 273 273 264 255 279 375 369 369'],
    ...[[46, '#7a0010'], [85, '#a00000'], [130, '#500010'], [226, '#500010'], [325, '#500010'], [391, '#8c0000'], [430, '#8c0000']].map(([y, c]) => ['line', c, '5 4', 1, `37,${1620 + y} 2372,${1620 + y}`]),
    ['frame', 36, 1652, 2374, 2062, SLATE],
    ['line', '#ffff00', '', 1, '37,1705 50,1732 68,1732 97,1744 109,1822 133,1822 145,1798 157,1798 170,1885 193,1885 217,1891 230,1951 277,1951 289,1999 337,1999 349,2031 397,2031 408,2050 455,2050 469,2058 1180,2058 1195,2047 1237,2044 1249,2020 1272,2020 1285,2005 1298,2010 1308,1960 1357,1958 1370,1888 1417,1888 1430,1807 1477,1807 1490,1750 1537,1750 1550,1717 1600,1717 1610,1697 1630,1697 1660,1707 1715,1711 1730,1720 1765,1720 1785,1711 1795,1715 1813,1735 1830,1725 1860,1725 1885,1714 2112,1714'],
    ['line', '#1e90ff', '', 1, '37,1700 45,1740 60,1835 75,1910 97,1992 121,2040 140,2056 190,2056 215,2035 230,1995 245,1938 270,1850 290,1770 301,1747 315,1770 335,1860 350,1940 362,2015 375,2015 397,1978 430,1990 462,1995 485,2020 505,2040 525,2028 540,1985 560,1950 600,1948 625,1982 650,2002 665,1990 690,1930 710,1891 735,1903 755,1940 780,2020 795,2045 810,2056 905,2056 920,2030 935,1985 950,1885 962,1828 1009,1738 1035,1790 1060,1885 1082,1948 1100,1900 1118,1815 1131,1787 1145,1805 1160,1870 1180,1960 1201,2002 1220,1940 1245,1800 1265,1730 1297,1665 1320,1656 1360,1656 1380,1675 1450,1675 1480,1700 1490,1725 1500,1780 1515,1870 1535,1950 1555,2020 1575,2050 1600,2052 1605,2045 1620,1990 1640,1910 1655,1820 1670,1750 1685,1713 1695,1708 1705,1718 1725,1790 1745,1900 1760,1990 1775,2035 1787,2045 1800,2015 1820,1910 1840,1800 1860,1720 1875,1698 1895,1710 1920,1735 1970,1735 1990,1715 2015,1670 2035,1657 2060,1658 2080,1670 2095,1715 2105,1780 2112,1842'],
    ...['121,2040 137,2055 185,2057 205,2050 218,2054', '362,2020 373,2054', '795,2042 810,2056 905,2056 913,2050', '1560,2035 1575,2052 1585,2056 1610,2055', '1777,2040 1789,2052'].map((p) => ['line', '#ff0000', '', 3, p]),
    ...['1297,1666 1310,1657 1360,1657 1370,1666', '2018,1668 2035,1658 2050,1657 2080,1664'].map((p) => ['line', LIME, '', 3, p]),
    ['text', 48, 1679, SLATE, 'SSRC( SR:3, FP:21 ) 0.0549 1.1174 1.1174'],
    ['text', 2192, 1688, '#f01010', '[ SL: 7.9 ]', 'value'], ['text', 2192, 1732, '#20e020', '[ TP: 4.7 ]', 'value'],
    ['text', 2192, 1772, '#606060', '0.05', 'bold'], ['area', '#ff0000', '2346,1770 2358,1770 2352,1780'],
    ['text', 2110, 1830, '#20e020', '2.4', 'value'], ['text', 2110, 1885, '#e0b020', '1.8', 'value'], ['text', 2110, 1940, '#f01010', '5.9', 'value'],
    ['text', 2196, 1831, '#484848', 'TMA', 'bold'], ['text', 2316, 1831, '#484848', 'C', 'bold'],
    ['area', '#20e020', '2186,1903 2234,1903 2210,1861'], ['text', 2358, 1886, '#f0c020', '(19)', 'big', 'end'],
    ['text', 2195, 1941, '#484848', 'S', 'bold'], ['text', 2354, 1941, '#20b0f0', '8.3', 'big', 'end'],
    ...[['0.95', 47], ['1', 53], ['0.75', 87], ['30', 131], ['20', 226], ['0.00', 239], ['10', 326], ['-0.75', 392], ['-1', 417], ['-0.95', 431]].map(([s, y]) => ['text', 2382, 1620 + y, SLATE, s]),
    ...times(34, 192, 2090, 2062, ['26 May 2016', '26 May 09:10', '26 May 09:26', '26 May 09:42', '26 May 09:58', '26 May 10:14', '26 May 10:30', '26 May 10:46', '26 May 11:02', '26 May 11:18', '26 May 11:34'], SLATE),
  ] },
};

function draw(svg) {
  const { view: [l, t, r, b], items } = charts[svg.dataset.chart];
  const W = svg.clientWidth, H = svg.clientHeight;
  const X = (x) => px((x - l) / (r - l) * W), Y = (y) => px((y - t) / (b - t) * H);
  const rect = (x, y, w, h, fill, extra = '') => `<rect x="${x}" y="${y}" width="${w}" height="${Math.max(h, 1)}" fill="${fill}" ${extra}/>`;
  const path = (pts) => pts.split(' ').map((p) => { const [x, y] = p.split(','); return (X(x) + 0.5) + ',' + (Y(y) + 0.5); }).join(' ');
  const text = (x, y, c, s, cls = '', anchor = 'start', dy = 3) => `<text x="${x}" y="${y + dy}" fill="${c}" class="${cls}" text-anchor="${anchor}">${s}</text>`;
  const shift = { tag: 4, news: 4, value: 5, bold: 5, big: 6, mark: 4 };
  const tint = { r: '#ff0000', b: '#1e90ff', c: '#00ffff' };
  const shapes = {
    frame: (x1, y1, x2, y2, c) => `<rect x="${X(x1) + 0.5}" y="${Y(y1) + 0.5}" width="${X(x2) - X(x1)}" height="${Y(y2) - Y(y1)}" fill="none" stroke="${c}"/>`,
    zone: (x1, y1, x2, y2, c) => rect(X(x1), Y(y1), X(x2) - X(x1), Y(y2) - Y(y1), c),
    area: (c, pts) => `<polygon points="${path(pts)}" fill="${c}"/>`,
    h: (y, x1, x2, c, w = 1) => rect(X(x1), Y(y), X(x2) - X(x1), w, c),
    v: (x, y1, y2, c) => rect(X(x), Y(y1), 1, Y(y2) - Y(y1), c),
    line: (c, dash, w, pts) => `<polyline points="${path(pts)}" fill="none" stroke="${c}" stroke-width="${w}" stroke-dasharray="${dash}"/>`,
    text: (x, y, c, s, cls, anchor) => text(X(x), Y(y), c, s, cls, anchor, shift[cls] || 4),
    side: (x, y, c, s) => `<text x="0" y="0" transform="translate(${X(x) + 3} ${Y(y)}) rotate(-90)" fill="${c}" class="event">${s}</text>`,
    price: (x, y, bg, fg, s, tx) => rect(X(x), Y(y) - 5, W - X(x), 11, bg) + text(X(tx), Y(y), fg, s, '', 'start', 4),
    boxed: (y, c, s) => rect(X(2115), Y(y), 10, 1, c) + `<rect x="${X(2146) + 0.5}" y="${Y(y) - 5.5}" width="41" height="12" fill="none" stroke="${c}"/>` + text(X(2149), Y(y), c, s, 'tag', 'start', 5),
    tri: (x, y, c) => `<path d="M${X(x) - 4} ${Y(y) - 2}h9l-4.500 5z" fill="${c}"/>`,
    grip: (x, y, c) => `<rect x="${X(x) - 1.5}" y="${Y(y) - 1.5}" width="4" height="4" fill="#fff" stroke="${c}"/>`,
    dot: (x, y) => `<circle cx="${X(x) + 0.5}" cy="${Y(y) + 0.5}" r="2.500" fill="#ff0000"/>`,
    smile: (x, y) => `<g fill="none" stroke="#708090" shape-rendering="auto"><circle cx="${X(x)}" cy="${Y(y)}" r="5"/><path d="M${X(x) - 3} ${Y(y) + 1}q3 3 6 0M${X(x) - 2} ${Y(y) - 3}v2M${X(x) + 2} ${Y(y) - 3}v2"/></g>`,
    sun: (x, y, c) => `<circle cx="${X(x)}" cy="${Y(y)}" r="5" fill="#ffff00" stroke="${c}" stroke-width="2" stroke-dasharray="2 1"/>`,
    candles: (x0, step, list) => list.split(',').map((d, i) => {
      const [hi, top, bot, lo, kind] = d.split(' '), x = X(x0 + i * step), y = Y(top), h = Y(bot) - y;
      return rect(x, Y(hi), 1, Y(lo) - Y(hi), LIME) + (h < 2 ? rect(x - 2, y, 5, 1, LIME)
        : `<rect x="${x - 1.5}" y="${y + 0.5}" width="4" height="${h}" fill="${kind === 'w' ? '#fff' : '#000'}" stroke="${LIME}"/>`);
    }).join(''),
    bars: (x0, step, w, list) => list.split(',').map((d, i) => {
      if (d === '-') return '';
      const [hi, top, bot, lo, k] = d.split(' '), x = X(x0 + i * step);
      return rect(x, Y(hi), 1, Y(lo) - Y(hi), tint[k]) + rect(x - 1, Y(top), w, Y(bot) - Y(top), tint[k]);
    }).join(''),
    histogram: (x0, step, base, list) => list.split(' ').map((v, i, all) => {
      const y = Y(1620 + +v), gray = i < 2 || i > all.length - 16;
      return rect(X(x0 + i * step) - 1, y, 3, Y(base) - y, gray ? '#484848' : '#08293c');
    }).join(''),
  };
  svg.innerHTML = `<g shape-rendering="crispEdges">${items.map(([kind, ...args]) => shapes[kind](...args)).join('')}</g>`;
}

const drawAll = () => document.querySelectorAll('.chart').forEach(draw);
drawAll();
window.addEventListener('resize', drawAll);
```
